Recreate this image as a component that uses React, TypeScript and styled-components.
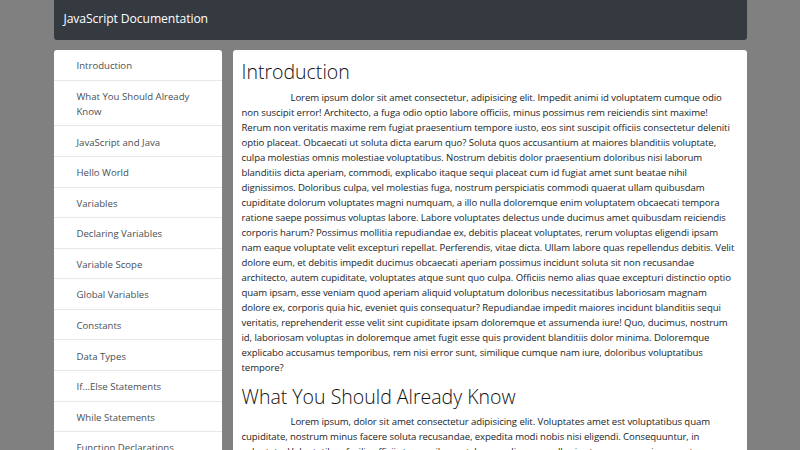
import React from 'react';
import styled, { createGlobalStyle } from 'styled-components';

const colors = {
  page: '#808080',
  dark: '#343a40',
  text: '#212529',
  muted: '#495057',
  border: '#e8e8e8',
};

const GlobalStyle = createGlobalStyle`
  html, body {
    margin: 0;
    padding: 0;
    height: 100%;
    overflow: hidden;
    background: ${colors.page};
  }
  body {
    font-family: "Open Sans", "Noto Sans", sans-serif;
    color: ${colors.text};
  }
`;

const Page = styled.div`
  width: 693px;
  margin: 0 auto;
  height: 450px;
  display: flex;
  flex-direction: column;
`;

const NavBar = styled.header`
  height: 40px;
  flex-shrink: 0;
  box-sizing: border-box;
  display: flex;
  align-items: center;
  padding: 0 10px 4px;
  background-color: ${colors.dark};
  border-radius: 0 0 3px 3px;
`;

const Brand = styled.span`
  color: #fff;
  font-size: 12.2px;
  letter-spacing: -0.1px;
`;

const Body = styled.div`
  display: flex;
  gap: 11px;
  margin-top: 10px;
  align-items: flex-start;
`;

const SideNav = styled.nav`
  width: 168px;
  flex-shrink: 0;
  background: #fff;
  border-radius: 3px;
  display: flex;
  flex-direction: column;
`;

const NavLink = styled.a`
  display: block;
  padding: 8.2px 12px 6.2px 23px;
  font-size: 9.6px;
  line-height: 15.2px;
  color: ${colors.muted};
  text-decoration: none;
  border-bottom: 1px solid ${colors.border};
`;

const Main = styled.main`
  flex: 1;
  background: #fff;
  border-radius: 3px;
  padding: 9px 9px 0 9px;
`;

const Section = styled.section``;

const Heading = styled.h2`
  margin: 0 0 4.5px;
  font-size: 19.5px;
  font-weight: 300;
  line-height: 26px;
  color: #111;
`;

const Text = styled.p`
  margin: 0 0 9px;
  font-size: 9.6px;
  line-height: 15px;
  letter-spacing: -0.09px;
  text-indent: 49px;
  color: ${colors.text};
`;

const topics = [
  'Introduction',
  'What You Should Already Know',
  'JavaScript and Java',
  'Hello World',
  'Variables',
  'Declaring Variables',
  'Variable Scope',
  'Global Variables',
  'Constants',
  'Data Types',
  'If...Else Statements',
  'While Statements',
  'Function Declarations',
  'Reference',
];

const sections = [
  {
    title: 'Introduction',
    text: 'Lorem ipsum dolor sit amet consectetur, adipisicing elit. Impedit animi id voluptatem cumque odio non suscipit error! Architecto, a fuga odio optio labore officiis, minus possimus rem reiciendis sint maxime! Rerum non veritatis maxime rem fugiat praesentium tempore iusto, eos sint suscipit officiis consectetur deleniti optio placeat. Obcaecati ut soluta dicta earum quo? Soluta quos accusantium at maiores blanditiis voluptate, culpa molestias omnis molestiae voluptatibus. Nostrum debitis dolor praesentium doloribus nisi laborum blanditiis dicta aperiam, commodi, explicabo itaque sequi placeat cum id fugiat amet sunt beatae nihil dignissimos. Doloribus culpa, vel molestias fuga, nostrum perspiciatis commodi quaerat ullam quibusdam cupiditate dolorum voluptates magni numquam, a illo nulla doloremque enim voluptatem obcaecati tempora ratione saepe possimus voluptas labore. Labore voluptates delectus unde ducimus amet quibusdam reiciendis corporis harum? Possimus mollitia repudiandae ex, debitis placeat voluptates, rerum voluptas eligendi ipsam nam eaque voluptate velit excepturi repellat. Perferendis, vitae dicta. Ullam labore quas repellendus debitis. Velit dolore eum, et debitis impedit ducimus obcaecati aperiam possimus incidunt soluta sit non recusandae architecto, autem cupiditate, voluptates atque sunt quo culpa. Officiis nemo alias quae excepturi distinctio optio quam ipsam, esse veniam quod aperiam aliquid voluptatum doloribus necessitatibus laboriosam magnam dolore ex, corporis quia hic, eveniet quis consequatur? Repudiandae impedit maiores incidunt blanditiis sequi veritatis, reprehenderit esse velit sint cupiditate ipsam doloremque et assumenda iure! Quo, ducimus, nostrum id, laboriosam voluptas in doloremque amet fugit esse quis provident blanditiis dolor minima. Doloremque explicabo accusamus temporibus, rem nisi error sunt, similique cumque nam iure, doloribus voluptatibus tempore?',
  },
  {
    title: 'What You Should Already Know',
    text: 'Lorem ipsum, dolor sit amet consectetur adipisicing elit. Voluptates amet est voluptatibus quam cupiditate, nostrum minus facere soluta recusandae, expedita modi nobis nisi eligendi. Consequuntur, in voluptate. Voluptatibus facilis officiis temporibus est, harum aliquam, nulla sive tempora quasi, quaerat cumque voluptatum, maxime dolores.',
  },
];

const App = () => {
  return (
    <>
      <GlobalStyle />
      <Page>
        <NavBar>
          <Brand>JavaScript Documentation</Brand>
        </NavBar>
        <Body>
          <SideNav>
            {topics.map((t) => (
              <NavLink key={t} href="#">{t}</NavLink>
            ))}
          </SideNav>
          <Main>
            {sections.map((s) => (
              <Section key={s.title}>
                <Heading>{s.title}</Heading>
                <Text>{s.text}</Text>
              </Section>
            ))}
          </Main>
        </Body>
      </Page>
    </>
  );
};

export default App;
